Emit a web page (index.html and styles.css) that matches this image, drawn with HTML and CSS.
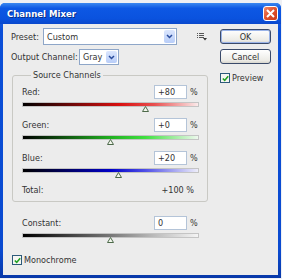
FILE: index.html
```html
<!DOCTYPE html>
<html lang="en">
<head>
    <meta charset="UTF-8">
    <title>Channel Mixer</title>
    <link rel="stylesheet" href="styles.css">
</head>
<body>
    <div class="window">
        <div class="titlebar">
            <span class="title">Channel Mixer</span>
            <span class="close">
                <svg width="9" height="9" viewBox="0 0 9 9"><path d="M1 1L8 8M8 1L1 8" stroke="#fff" stroke-width="2"/></svg>
            </span>
        </div>

        <div class="dialog">
            <div class="left">
                <!-- Preset row -->
                <div class="row row-preset">
                    <span class="lbl lbl-preset">Preset:</span>
                    <div class="select select-preset">
                        <span class="select-text">Custom</span>
                        <span class="drop"><svg width="7" height="5" viewBox="0 0 7 5"><path d="M1 1L3.5 3.5L6 1" stroke="#2a4c9c" stroke-width="1.5" fill="none"/></svg></span>
                    </div>
                    <span class="menu-icon">
                        <svg width="10" height="8" viewBox="0 0 10 8">
                            <path d="M0 0.5h1M2 0.5h5M0 2.5h1M2 2.5h5M0 4.5h1M2 4.5h5" stroke="#555" stroke-width="1"/>
                            <path d="M6 5h4L8 7.5z" fill="#333"/>
                        </svg>
                    </span>
                </div>

                <!-- Output channel row -->
                <div class="row row-output">
                    <span class="lbl lbl-output">Output Channel:</span>
                    <div class="select select-output">
                        <span class="select-text">Gray</span>
                        <span class="drop"><svg width="7" height="5" viewBox="0 0 7 5"><path d="M1 1L3.5 3.5L6 1" stroke="#2a4c9c" stroke-width="1.5" fill="none"/></svg></span>
                    </div>
                </div>

                <fieldset class="group">
                    <legend>Source Channels</legend>

                    <div class="channel">
                        <div class="ch-head">
                            <span class="ch-label">Red:</span>
                            <span class="num">+80</span>
                            <span class="pct">%</span>
                        </div>
                        <div class="track track-red">
                            <span class="thumb" style="left: 70%"><svg width="7" height="6" viewBox="0 0 7 6"><path d="M3.5 0.5L6.5 5.5H0.5z" fill="#f4f8ee" stroke="#4d6a4a"/></svg></span>
                        </div>
                    </div>

                    <div class="channel">
                        <div class="ch-head">
                            <span class="ch-label">Green:</span>
                            <span class="num">+0</span>
                            <span class="pct">%</span>
                        </div>
                        <div class="track track-green">
                            <span class="thumb" style="left: 50%"><svg width="7" height="6" viewBox="0 0 7 6"><path d="M3.5 0.5L6.5 5.5H0.5z" fill="#f4f8ee" stroke="#4d6a4a"/></svg></span>
                        </div>
                    </div>

                    <div class="channel">
                        <div class="ch-head">
                            <span class="ch-label">Blue:</span>
                            <span class="num">+20</span>
                            <span class="pct">%</span>
                        </div>
                        <div class="track track-blue">
                            <span class="thumb" style="left: 55%"><svg width="7" height="6" viewBox="0 0 7 6"><path d="M3.5 0.5L6.5 5.5H0.5z" fill="#f4f8ee" stroke="#4d6a4a"/></svg></span>
                        </div>
                    </div>

                    <div class="total">
                        <span class="ch-label">Total:</span>
                        <span class="total-val">+100 %</span>
                    </div>
                </fieldset>

                <div class="channel constant">
                    <div class="ch-head">
                        <span class="ch-label">Constant:</span>
                        <span class="num">0</span>
                        <span class="pct">%</span>
                    </div>
                    <div class="track track-gray">
                        <span class="thumb" style="left: 50%"><svg width="7" height="6" viewBox="0 0 7 6"><path d="M3.5 0.5L6.5 5.5H0.5z" fill="#f4f8ee" stroke="#4d6a4a"/></svg></span>
                    </div>
                </div>

                <label class="check check-mono">
                    <span class="box"><svg width="7" height="7" viewBox="0 0 7 7"><path d="M0.8 3.5L2.7 5.4L6.2 1.2" stroke="#21a121" stroke-width="1.6" fill="none"/></svg></span>
                    Monochrome
                </label>
            </div>

            <div class="right">
                <div class="btn btn-default">OK</div>
                <div class="btn">Cancel</div>
                <label class="check check-preview">
                    <span class="box"><svg width="7" height="7" viewBox="0 0 7 7"><path d="M0.8 3.5L2.7 5.4L6.2 1.2" stroke="#21a121" stroke-width="1.6" fill="none"/></svg></span>
                    Preview
                </label>
            </div>
        </div>
    </div>
</body>
</html>
```

FILE: styles.css
```css
body {
    margin: 0;
    padding-top: 3px;
    background-color: #eef0f4;
    font-family: "DejaVu Sans Condensed", "DejaVu Sans", sans-serif;
    font-size: 9px;
    color: #333;
}
.window {
    width: 281px;
    height: 275px;
    background: linear-gradient(#2c6fe8, #0b4fd8 10%, #0a4ad0 90%, #0838a8);
    border-radius: 5px 5px 0 0;
    display: flex;
    flex-direction: column;
}
.titlebar {
    height: 21px;
    display: flex;
    align-items: center;
    padding: 0 3px 0 7px;
    background: linear-gradient(#3a88f0, #0d58e4 25%, #0a52de 75%, #0a48cc);
    border-radius: 5px 5px 0 0;
}
.title {
    flex: 1;
    color: #fff;
    font-weight: bold;
    font-size: 9.5px;
    text-shadow: 1px 1px 0 #0a2f86;
}
.close {
    width: 15px;
    height: 15px;
    border: 1px solid #fff;
    border-radius: 3px;
    box-sizing: border-box;
    background: linear-gradient(135deg, #f08a6a, #e0502c 50%, #c83a18);
    display: flex;
    align-items: center;
    justify-content: center;
}
.dialog {
    flex: 1;
    margin: 0 3px 3px 3px;
    background-color: #ececec;
    display: flex;
    padding: 4px 7px 0 8px;
}
.left {
    width: 200px;
}
.right {
    margin-left: auto;
    width: 51px;
    padding-top: 1px;
}
.row {
    display: flex;
    align-items: center;
}
.row-preset {
    height: 17px;
}
.row-output {
    height: 16px;
    margin-top: 4px;
}
.lbl-preset {
    width: 32px;
}
.lbl-output {
    width: 68px;
}
.select {
    height: 100%;
    box-sizing: border-box;
    border: 1px solid #8ea6c8;
    background-color: #fff;
    display: flex;
    align-items: center;
    padding: 1px;
}
.select-preset {
    width: 134px;
}
.select-output {
    width: 40px;
}
.select-text {
    flex: 1;
    padding-left: 2px;
}
.drop {
    width: 11px;
    height: 100%;
    background: linear-gradient(#dbe6fd, #b8cdf8);
    border-radius: 2px;
    display: flex;
    align-items: center;
    justify-content: center;
}
.menu-icon {
    margin-left: 20px;
    display: flex;
}
.group {
    margin: 5px 0 0 1px;
    width: 196px;
    box-sizing: border-box;
    padding: 4px 8px 6px 9px;
    border: 1px solid #c9c9c4;
    border-radius: 3px;
}
.group legend {
    padding: 0 2px;
    margin-left: 9px;
    line-height: 11px;
}
.channel {
    margin-bottom: 11px;
}
.ch-head {
    display: flex;
    align-items: center;
    height: 14px;
    width: 177px;
}
.ch-label {
    flex: 1;
}
.num {
    width: 33px;
    height: 14px;
    box-sizing: border-box;
    border: 1px solid #b4c4d8;
    background-color: #fff;
    padding-left: 3px;
    line-height: 12px;
}
.pct {
    width: 9px;
    margin-left: 3px;
}
.track {
    position: relative;
    width: 177px;
    height: 5px;
    margin-top: 3px;
    box-sizing: border-box;
    border: 1px solid #c4c4c4;
}
.track-red {
    background: linear-gradient(to right, #000, #d81010 55%, #e85050 75%, #fbeaea);
}
.track-green {
    background: linear-gradient(to right, #000, #20b020 50%, #40e040 70%, #eef8ee);
}
.track-blue {
    background: linear-gradient(to right, #000, #0000c8 50%, #5050e8 70%, #eeeefa);
}
.track-gray {
    background: linear-gradient(to right, #000, #777 50%, #bbb 75%, #f4f4f4);
}
.thumb {
    position: absolute;
    top: 3px;
    margin-left: -4px;
    display: flex;
}
.total {
    display: flex;
    width: 172px;
    height: 11px;
    align-items: center;
}
.constant {
    margin: 14px 0 0 11px;
}
.check {
    display: flex;
    align-items: center;
    gap: 2px;
}
.box {
    width: 10px;
    height: 10px;
    box-sizing: border-box;
    border: 1px solid #2d5a7a;
    background-color: #f6f6f2;
    display: flex;
    align-items: center;
    justify-content: center;
}
.check-mono {
    margin: 17px 0 0 1px;
}
.btn {
    height: 15px;
    box-sizing: border-box;
    border: 1px solid #3a4a6a;
    border-radius: 3px;
    background: linear-gradient(#ffffff, #ecebe6 80%, #d8d6ce);
    display: flex;
    align-items: center;
    justify-content: center;
    margin-bottom: 5px;
}
.btn-default {
    box-shadow: inset 0 0 0 1px #9bb4e8;
}
.check-preview {
    margin-top: 9px;
}
```
